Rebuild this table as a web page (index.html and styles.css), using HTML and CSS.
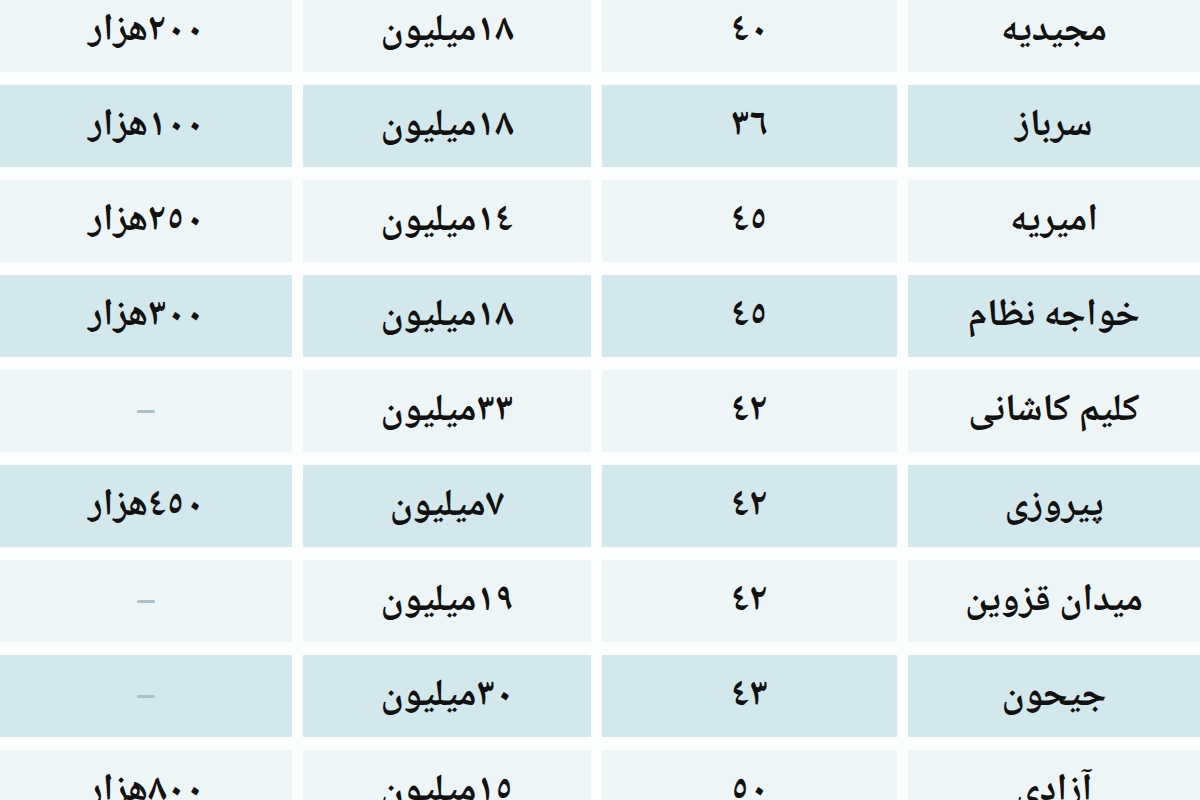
FILE: index.html
```html
<!DOCTYPE html>
<html lang="fa" dir="rtl">
<head>
<meta charset="utf-8">
<link rel="stylesheet" href="styles.css">
</head>
<body>
<div class="table">
  <div class="cell light name">مجیدیه</div><div class="cell light">٤٠</div><div class="cell light">١٨میلیون</div><div class="cell light">٢٠٠هزار</div>
  <div class="cell blue name">سرباز</div><div class="cell blue">٣٦</div><div class="cell blue">١٨میلیون</div><div class="cell blue">١٠٠هزار</div>
  <div class="cell light name">امیریه</div><div class="cell light">٤٥</div><div class="cell light">١٤میلیون</div><div class="cell light">٢٥٠هزار</div>
  <div class="cell blue name">خواجه نظام</div><div class="cell blue">٤٥</div><div class="cell blue">١٨میلیون</div><div class="cell blue">٣٠٠هزار</div>
  <div class="cell light name">کلیم کاشانی</div><div class="cell light">٤٢</div><div class="cell light">٣٣میلیون</div><div class="cell light"><span class="dash"></span></div>
  <div class="cell blue name">پیروزی</div><div class="cell blue">٤٢</div><div class="cell blue">٧میلیون</div><div class="cell blue">٤٥٠هزار</div>
  <div class="cell light name">میدان قزوین</div><div class="cell light">٤٢</div><div class="cell light">١٩میلیون</div><div class="cell light"><span class="dash"></span></div>
  <div class="cell blue name">جیحون</div><div class="cell blue">٤٣</div><div class="cell blue">٣٠میلیون</div><div class="cell blue"><span class="dash"></span></div>
  <div class="cell light name">آزادی</div><div class="cell light">٥٠</div><div class="cell light">١٥میلیون</div><div class="cell light">٨٠٠هزار</div>
</div>
</body>
</html>
```
FILE: styles.css
```css
html, body {
  margin: 0;
  padding: 0;
  background: #fcfefe;
  overflow: hidden;
  width: 1200px;
  height: 800px;
}
.table {
  direction: rtl;
  display: grid;
  grid-template-columns: 292px 295px 288px 292px;
  grid-auto-rows: 82px;
  column-gap: 11px;
  row-gap: 13px;
  margin-top: -10px;
  font-family: "Noto Naskh Arabic", "Noto Sans Arabic", "DejaVu Sans", sans-serif;
  font-weight: bold;
  font-size: 38px;
  color: #111;
}
.cell {
  display: flex;
  align-items: center;
  justify-content: center;
  white-space: nowrap;
}
.light { background: #eef5f6; }
.blue { background: #d3e8ec; }
.dash {
  display: block;
  width: 18px;
  height: 3px;
  border-radius: 2px;
  background: #a9c0c6;
}
```
